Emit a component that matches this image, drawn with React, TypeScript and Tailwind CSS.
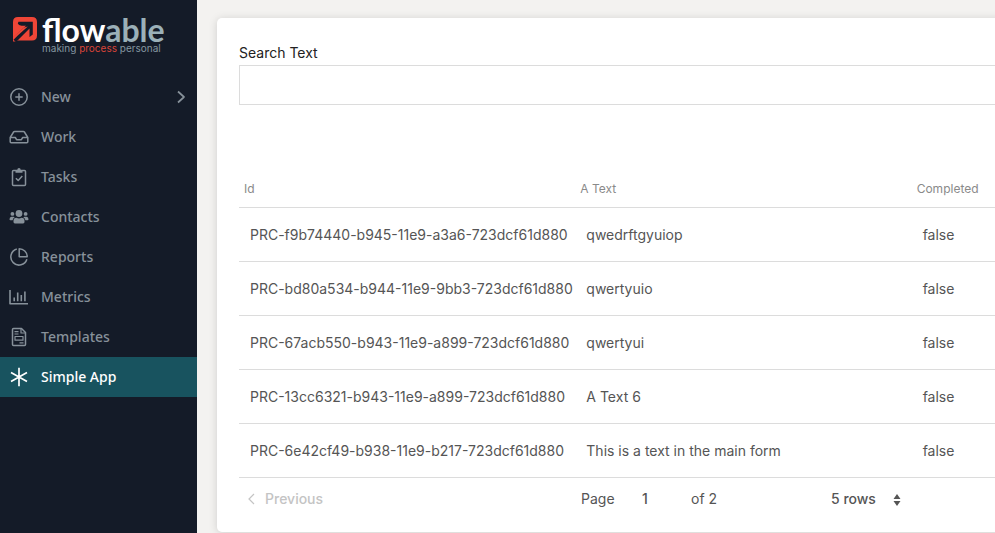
import React from "react";

const stroke = {
  fill: "none",
  stroke: "currentColor",
  strokeWidth: 1.5,
  strokeLinejoin: "round" as const,
};

function Icon({ children }: { children: React.ReactNode }) {
  return (
    <svg viewBox="0 0 20 20" className="size-5 shrink-0" aria-hidden="true">
      {children}
    </svg>
  );
}

const items: { label: string; icon: React.ReactNode }[] = [
  {
    label: "New",
    icon: (
      <g {...stroke}>
        <circle cx="10" cy="10" r="8.2" />
        <path d="M10 6.3v7.4M6.3 10h7.4" />
      </g>
    ),
  },
  {
    label: "Work",
    icon: (
      <g {...stroke}>
        <path d="M1.2 10.5 4.6 5q.4-.6 1.1-.6h8.6q.7 0 1.100.6l3.400 5.500v4.300q0 1-1 1H2.200q-1 0-1-1z" />
        <path d="M1.500 10.500h4.800l1.300 2.200h4.800l1.300-2.200h4.800" />
      </g>
    ),
  },
  {
    label: "Tasks",
    icon: (
      <g {...stroke}>
        <rect x="3.500" y="3.600" width="13" height="15" rx="1" />
        <path d="m6.900 11.200 2.300 2.300 4.100-4.500" />
        <path
          d="M6.500 5.800V3.300h1.700q.2-2.300 1.800-2.300t1.800 2.300h1.700v2.500z"
          fill="currentColor"
          stroke="none"
        />
      </g>
    ),
  },
  {
    label: "Contacts",
    icon: (
      <g fill="currentColor">
        <circle cx="10" cy="6.500" r="3.400" />
        <circle cx="3.400" cy="6.900" r="1.900" />
        <circle cx="16.600" cy="6.900" r="1.900" />
        <path d="M4.500 15v-1.200q0-3 3-3 1.200.8 2.500.8t2.500-.8q3 0 3 3V15q0 1.400-1.400 1.400H5.900Q4.500 16.400 4.500 15z" />
        <path d="M.500 12.200q0-2.500 2-2.500h2q.7 0 1.200.5-1.800 1-2.100 3H1.500q-1 0-1-1zM19.500 12.200q0-2.500-2-2.500h-2q-.7 0-1.200.5 1.800 1 2.100 3h2.100q1 0 1-1z" />
      </g>
    ),
  },
  {
    label: "Reports",
    icon: (
      <g {...stroke}>
        <path d="M7.800 2A8.200 8.200 0 1 0 17.900 12.300" />
        <path d="M10.200 1.700a8.100 8.100 0 0 1 8 8h-8z" />
      </g>
    ),
  },
  {
    label: "Metrics",
    icon: (
      <g {...stroke} strokeWidth={1.6}>
        <path d="M1 3v13.700H19" />
        <path d="M5.200 10.500v3.700M8.700 5.500v8.700M12.300 8v6.200M15.900 4.500v9.700" />
      </g>
    ),
  },
  {
    label: "Templates",
    icon: (
      <g {...stroke}>
        <path d="M4.500 1.500h8l4 4v12q0 1-1 1h-11q-1 0-1-1v-15q0-1 1-1z" />
        <path d="M12 1.800V6h4.200" strokeWidth="1.200" />
        <path d="M5.500 4.700h4M5.500 7h4M10.500 15.800h4" strokeWidth="1.200" />
        <rect x="6" y="9.500" width="8" height="3.700" strokeWidth="1.200" />
      </g>
    ),
  },
  {
    label: "Simple App",
    icon: (
      <g {...stroke} strokeWidth={1.7}>
        <path d="M10 .8v18.400M2 5.400l16 9.200M18 5.400 2 14.600" />
      </g>
    ),
  },
];

const columns = ["Id", "A Text", "Completed"];

const rows = [
  ["PRC-f9b74440-b945-11e9-a3a6-723dcf61d880", "qwedrftgyuiop", "false"],
  ["PRC-bd80a534-b944-11e9-9bb3-723dcf61d880", "qwertyuio", "false"],
  ["PRC-67acb550-b943-11e9-a899-723dcf61d880", "qwertyui", "false"],
  ["PRC-13cc6321-b943-11e9-a899-723dcf61d880", "A Text 6", "false"],
  ["PRC-6e42cf49-b938-11e9-b217-723dcf61d880", "This is a text in the main form", "false"],
];

function Logo() {
  return (
    <a href="#home" aria-label="Flowable" className="flex h-[77px] items-start gap-1 pt-4 pl-3">
      <svg viewBox="0 0 26 26" className="size-[26px] shrink-0" aria-hidden="true">
        <path d="M6 1h14q5 0 5 5v13.500q0 5-5 5H6L3 25.500H1V6q0-5 5-5z" fill="#ef4637" />
        <path
          d="M6.500 5.800H20.800V18.500L17.500 21V12.500L4 26 0 22.500 14 9.800H9.500Q6.500 9.500 5.800 7.500z"
          fill="#141b28"
        />
        <path d="M15.800 10.500 5.500 19.800 1 24.300V21l11-9.500z" fill="#ef4637" />
      </svg>
      <span className="flex flex-col">
        <span className="font-[Lato,sans-serif] text-[32px] leading-[27px] font-bold text-white">
          flow<span className="text-[#9bb0b8]">able</span>
        </span>
        <span className="font-[Inter,sans-serif] text-[10px] leading-[10px] text-[#8496a0]">
          making <span className="text-[#d94438]">process</span> personal
        </span>
      </span>
    </a>
  );
}

function Sidebar() {
  return (
    <aside className="w-[197px] shrink-0 bg-[#141b28]">
      <Logo />
      <nav aria-label="Main">
        {items.map(({ label, icon }) => {
          const active = label === "Simple App";
          return (
            <a
              key={label}
              href="#"
              aria-current={active ? "page" : undefined}
              className={
                "flex h-10 items-center gap-3 px-[9px] font-['Noto_Sans',sans-serif] text-sm font-medium " +
                (active ? "bg-[#18535f] text-white" : "text-[#87919a]")
              }
            >
              <Icon>{icon}</Icon>
              <span className="grow">{label}</span>
              {label === "New" && (
                <svg viewBox="0 0 14 14" className="size-3.5" aria-hidden="true">
                  <path d="m4 1.500 6 5.500-6 5.500" {...stroke} strokeWidth="1.700" />
                </svg>
              )}
            </a>
          );
        })}
      </nav>
    </aside>
  );
}

function Pager() {
  return (
    <div className="flex h-[42px] items-center text-sm text-[#555]">
      <button type="button" disabled className="flex w-[342px] items-center gap-2 pl-1.5 font-medium text-[#c4c4c4]">
        <svg viewBox="0 0 12 12" className="size-3" aria-hidden="true">
          <path d="M9 1 4 6l5 5" fill="none" stroke="currentColor" strokeWidth="1.200" />
        </svg>
        Previous
      </button>
      <label htmlFor="page" className="w-9">
        Page
      </label>
      <input id="page" defaultValue="1" className="w-14 bg-transparent text-center font-medium outline-none" />
      <span className="ml-[18px] w-[140px]">of 2</span>
      <span className="relative">
        <select
          aria-label="Rows per page"
          className="w-[76px] appearance-none bg-transparent font-medium outline-none"
        >
          <option>5 rows</option>
          <option>10 rows</option>
        </select>
        <svg viewBox="0 0 8 14" className="pointer-events-none absolute top-1 right-1.5 h-3.5 w-2" aria-hidden="true">
          <path d="M4 1 7.500 6h-7zM4 13 .500 8h7z" fill="#555" />
        </svg>
      </span>
    </div>
  );
}

export default function App() {
  return (
    <div className="flex min-h-screen items-stretch bg-[#f3f2f0] font-[Inter,sans-serif]">
      <Sidebar />
      <main className="min-w-0 grow overflow-hidden pt-[18px] pb-0.5 pl-5">
        <section className="min-w-[1053px] rounded-[5px] bg-white px-[22px] pt-6 pb-3 shadow-[0_1px_8px_rgba(0,0,0,0.15)]">
          <label htmlFor="search" className="block pb-px text-sm leading-[22px] text-[#222]">
            Search Text
          </label>
          <input
            id="search"
            type="text"
            className="block h-10 w-full border border-[#dcdcdc] bg-white px-3 text-sm outline-none"
          />
          <table className="mt-16 w-full table-fixed border-collapse text-left text-[#555]">
            <thead>
              <tr className="h-[38px] border-b border-[#dcdcdc]">
                {columns.map((c) => (
                  <th key={c} scope="col" className="px-[5px] pt-0.5 text-xs font-normal text-[#8a8a8a]">
                    {c}
                  </th>
                ))}
              </tr>
            </thead>
            <tbody>
              {rows.map((r) => (
                <tr key={r[0]} className="h-[54px] border-b border-[#dcdcdc] text-sm">
                  {r.map((cell, i) => (
                    <td key={i} className="pt-0.5 pl-[11px] whitespace-nowrap">
                      {cell}
                    </td>
                  ))}
                </tr>
              ))}
            </tbody>
          </table>
          <Pager />
        </section>
      </main>
    </div>
  );
}
